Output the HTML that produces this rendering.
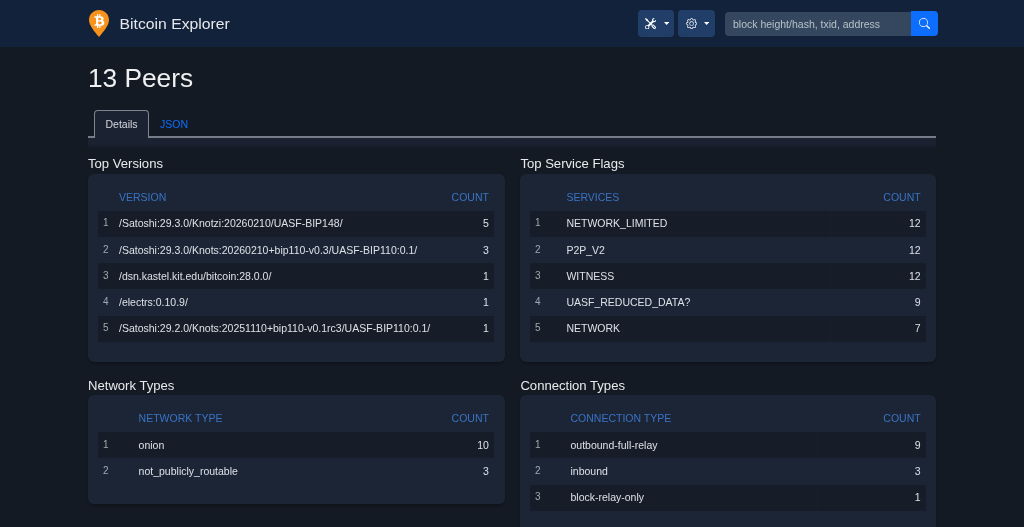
<!DOCTYPE html>
<html><head><meta charset="utf-8"><title>13 Peers</title><style>
*{box-sizing:border-box;margin:0;padding:0}
html,body{width:1024px;height:527px;overflow:hidden;background:#141a23;font-family:"Liberation Sans",sans-serif;color:#dde1e6}
.a{position:absolute;white-space:nowrap}
.nav{position:absolute;left:0;top:0;width:1024px;height:46.5px;background:#12223a}
.card{position:absolute;background:#1b2536;border-radius:6px;box-shadow:0 2px 2px -0.5px rgba(0,0,0,.22)}
.stripe{position:absolute;background:#161d29}
</style></head>
<body><div style="position:absolute;left:0;top:0;width:1024px;height:527px;will-change:transform">
<div class="nav"></div>
<svg class="a" style="left:88px;top:9px" width="22" height="29" viewBox="0 0 22 29">
<path d="M11 1.1 C5.4 1.1 1 5.5 1 11 C1 16.4 6.5 22.5 11 28 C15.5 22.5 21 16.4 21 11 C21 5.5 16.6 1.1 11 1.1Z" fill="#f7931a"/></svg>
<svg class="a" style="left:88.04px;top:9.66px" width="22.4" height="22.4" viewBox="0 0 64 64"><path transform="rotate(-14 32 32)" fill="#FFF" d="m46.11,27.441c0.637-4.258-2.605-6.547-7.038-8.074l1.438-5.768-3.511-0.875-1.4,5.616c-0.923-0.23-1.871-0.447-2.813-0.662l1.41-5.653-3.509-0.875-1.439,5.766c-0.764-0.174-1.514-0.346-2.242-0.527l0.004-0.018-4.842-1.209-0.934,3.75s2.605,0.597,2.55,0.634c1.422,0.355,1.679,1.296,1.636,2.042l-1.638,6.571c0.098,0.025,0.225,0.061,0.365,0.117-0.117-0.029-0.242-0.061-0.371-0.092l-2.296,9.205c-0.174,0.432-0.615,1.08-1.609,0.834,0.035,0.051-2.552-0.637-2.552-0.637l-1.743,4.019,4.569,1.139c0.85,0.213,1.683,0.436,2.503,0.646l-1.453,5.834,3.507,0.875,1.439-5.772c0.958,0.26,1.888,0.5,2.798,0.726l-1.434,5.745,3.511,0.875,1.453-5.823c5.987,1.133,10.489,0.676,12.384-4.739,1.527-4.360-0.076-6.875-3.226-8.515,2.294-0.529,4.022-2.038,4.483-5.155zM38.087,38.69c-1.085,4.36-8.426,2.003-10.806,1.412l1.928-7.729c2.38,0.594,10.012,1.77,8.878,6.317zm1.086-11.312c-0.99,3.966-7.1,1.951-9.082,1.457l1.748-7.007c1.982,0.494,8.365,1.416,7.334,5.55z"/></svg>
<div class="a" style="left:119.5px;top:15.39px;font-size:15.75px;line-height:18.9px;color:#e6e8eb;transform:scaleY(0.94);transform-origin:0 80%;">Bitcoin Explorer</div>
<div class="a" style="left:638px;top:10.3px;width:36px;height:26.5px;background:#213e69;border-radius:4px"></div>
<div class="a" style="left:678.2px;top:10.3px;width:36.6px;height:26.5px;background:#213e69;border-radius:4px"></div>
<svg class="a" style="left:644.7px;top:17.7px" width="11.3" height="11.3" viewBox="0 0 16 16" fill="#fff">
<path d="M1 0 0 1l2.2 3.081a1 1 0 0 0 .815.419h.07a1 1 0 0 1 .708.293l2.675 2.675-2.617 2.654A3.003 3.003 0 0 0 0 13a3 3 0 1 0 5.878-.851l2.654-2.617.968.968-.305.914a1 1 0 0 0 .242 1.023l3.27 3.27a.997.997 0 0 0 1.414 0l1.586-1.586a.997.997 0 0 0 0-1.414l-3.27-3.27a1 1 0 0 0-1.023-.242L10.5 9.5l-.96-.96 2.68-2.643A3.005 3.005 0 0 0 16 3c0-.269-.035-.53-.102-.777l-2.14 2.141L12 4l-.364-1.757L13.777.102a3 3 0 0 0-3.675 3.68L7.462 6.46 4.793 3.793a1 1 0 0 1-.293-.707v-.071a1 1 0 0 0-.419-.814L1 0Zm9.646 10.646a.5.5 0 0 1 .708 0l2.914 2.915a.5.5 0 0 1-.707.707l-2.915-2.914a.5.5 0 0 1 0-.708ZM3 11l.471.242.529.026.287.445.445.287.026.529L5 13l-.242.471-.026.529-.445.287-.287.445-.529.026L3 15l-.471-.242L2 14.732l-.287-.445L1.268 14l-.026-.529L1 13l.242-.471.026-.529.445-.287.287-.445.529-.026L3 11Z"/>
</svg>
<svg class="a" style="left:663.7px;top:21.9px" width="5.3" height="3" viewBox="0 0 5.3 3"><path d="M0 0 L5.3 0 L2.65 2.9Z" fill="#fff"/></svg>
<svg class="a" style="left:704.1px;top:21.9px" width="5.3" height="3" viewBox="0 0 5.3 3"><path d="M0 0 L5.3 0 L2.65 2.9Z" fill="#fff"/></svg>
<svg class="a" style="left:685.8px;top:17.7px" width="11.2" height="11.2" viewBox="0 0 16 16" fill="#fff">
<path d="M8 4.754a3.246 3.246 0 1 0 0 6.492 3.246 3.246 0 0 0 0-6.492zM5.754 8a2.246 2.246 0 1 1 4.492 0 2.246 2.246 0 0 1-4.492 0z"/>
<path d="M9.796 1.343c-.527-1.79-3.065-1.79-3.592 0l-.094.319a.873.873 0 0 1-1.255.52l-.292-.16c-1.64-.892-3.433.902-2.54 2.541l.159.292a.873.873 0 0 1-.52 1.255l-.319.094c-1.79.527-1.79 3.065 0 3.592l.319.094a.873.873 0 0 1 .52 1.255l-.16.292c-.892 1.64.901 3.434 2.541 2.54l.292-.159a.873.873 0 0 1 1.255.52l.094.319c.527 1.79 3.065 1.79 3.592 0l.094-.319a.873.873 0 0 1 1.255-.52l.292.16c1.64.893 3.434-.902 2.54-2.541l-.159-.292a.873.873 0 0 1 .52-1.255l.319-.094c1.79-.527 1.79-3.065 0-3.592l-.319-.094a.873.873 0 0 1-.52-1.255l.16-.292c.893-1.64-.902-3.433-2.541-2.54l-.292.159a.873.873 0 0 1-1.255-.52l-.094-.319zm-2.633.283c.246-.835 1.428-.835 1.674 0l.094.319a1.873 1.873 0 0 0 2.693 1.115l.291-.16c.764-.415 1.6.42 1.184 1.185l-.159.292a1.873 1.873 0 0 0 1.116 2.692l.318.094c.835.246.835 1.428 0 1.674l-.319.094a1.873 1.873 0 0 0-1.115 2.693l.16.291c.415.764-.42 1.6-1.185 1.184l-.291-.159a1.873 1.873 0 0 0-2.693 1.116l-.094.318c-.246.835-1.428.835-1.674 0l-.094-.319a1.873 1.873 0 0 0-2.692-1.115l-.292.16c-.764.415-1.6-.42-1.184-1.185l.159-.291A1.873 1.873 0 0 0 1.945 8.93l-.319-.094c-.835-.246-.835-1.428 0-1.674l.319-.094A1.873 1.873 0 0 0 3.06 4.377l-.16-.292c-.415-.764.42-1.6 1.185-1.184l.292.159a1.873 1.873 0 0 0 2.692-1.115l.094-.319z"/>
</svg>
<div class="a" style="left:724.5px;top:11.5px;width:190px;height:24.5px;background:#35475f;border-radius:4px 0 0 4px"></div>
<div class="a" style="left:733px;top:18.26px;font-size:10.5px;line-height:12.6px;color:#b6c2c9;">block height/hash, txid, address</div>
<div class="a" style="left:910.5px;top:11.3px;width:27.5px;height:24.7px;background:#0d6efd;border-radius:0 4px 4px 0"></div>
<svg class="a" style="left:918.5px;top:18px" width="11" height="11" viewBox="0 0 16 16" fill="#fff">
<path d="M11.742 10.344a6.5 6.5 0 1 0-1.397 1.398h-.001c.03.04.062.078.098.115l3.85 3.85a1 1 0 0 0 1.415-1.414l-3.85-3.85a1.007 1.007 0 0 0-.115-.1zM12 6.5a5.5 5.5 0 1 1-11 0 5.5 5.5 0 0 1 11 0z"/></svg>
<div class="a" style="left:88px;top:63.05px;font-size:26.25px;line-height:31.5px;color:#eef0f2;">13 Peers</div>
<div class="a" style="left:88px;top:136.2px;width:848px;height:1.4px;background:#767d88"></div>
<div class="a" style="left:88px;top:137.5px;width:848px;height:12px;background:linear-gradient(#1b2232 0%,#1a2131 45%,#141a23 100%)"></div>
<div class="a" style="left:93.9px;top:109.7px;width:55.2px;height:28.1px;background:#1b2232;border:1.3px solid #7f8690;border-bottom:none;border-radius:4px 4px 0 0"></div>
<div class="a" style="left:105.5px;top:117.96px;font-size:10.5px;line-height:12.6px;color:#d4d8de;">Details</div>
<div class="a" style="left:160px;top:117.96px;font-size:10.5px;line-height:12.6px;color:#0d6efd;">JSON</div>
<div class="a" style="left:88px;top:156.00px;font-size:13.1px;line-height:15.72px;color:#e8eaed;">Top Versions</div>
<div class="card" style="left:88px;top:174px;width:416.5px;height:187.7px"></div>
<div class="a" style="left:119px;top:190.86px;font-size:10.5px;line-height:12.6px;color:#3a73c4;">VERSION</div>
<div class="a" style="right:535.1px;top:190.86px;font-size:10.5px;line-height:12.6px;text-align:right;color:#3a73c4;">COUNT</div>
<div class="stripe" style="left:98px;top:210.80px;width:396.0px;height:26.2px"></div>
<div class="a" style="left:102.9px;top:217.44px;font-size:10px;line-height:12.0px;color:#a3a8b0;font-family:"Liberation Mono",monospace;">1</div>
<div class="a" style="left:119px;top:217.46px;font-size:10.5px;line-height:12.6px;">/Satoshi:29.3.0/Knotzi:20260210/UASF-BIP148/</div>
<div class="a" style="right:535.1px;top:217.46px;font-size:10.5px;line-height:12.6px;text-align:right;">5</div>
<div class="a" style="left:102.9px;top:243.63px;font-size:10px;line-height:12.0px;color:#a3a8b0;font-family:"Liberation Mono",monospace;">2</div>
<div class="a" style="left:119px;top:243.66px;font-size:10.5px;line-height:12.6px;">/Satoshi:29.3.0/Knots:20260210+bip110-v0.3/UASF-BIP110:0.1/</div>
<div class="a" style="right:535.1px;top:243.66px;font-size:10.5px;line-height:12.6px;text-align:right;">3</div>
<div class="stripe" style="left:98px;top:263.20px;width:396.0px;height:26.2px"></div>
<div class="a" style="left:102.9px;top:269.84px;font-size:10px;line-height:12.0px;color:#a3a8b0;font-family:"Liberation Mono",monospace;">3</div>
<div class="a" style="left:119px;top:269.86px;font-size:10.5px;line-height:12.6px;">/dsn.kastel.kit.edu/bitcoin:28.0.0/</div>
<div class="a" style="right:535.1px;top:269.86px;font-size:10.5px;line-height:12.6px;text-align:right;">1</div>
<div class="a" style="left:102.9px;top:296.04px;font-size:10px;line-height:12.0px;color:#a3a8b0;font-family:"Liberation Mono",monospace;">4</div>
<div class="a" style="left:119px;top:296.06px;font-size:10.5px;line-height:12.6px;">/electrs:0.10.9/</div>
<div class="a" style="right:535.1px;top:296.06px;font-size:10.5px;line-height:12.6px;text-align:right;">1</div>
<div class="stripe" style="left:98px;top:315.60px;width:396.0px;height:26.2px"></div>
<div class="a" style="left:102.9px;top:322.24px;font-size:10px;line-height:12.0px;color:#a3a8b0;font-family:"Liberation Mono",monospace;">5</div>
<div class="a" style="left:119px;top:322.26px;font-size:10.5px;line-height:12.6px;">/Satoshi:29.2.0/Knots:20251110+bip110-v0.1rc3/UASF-BIP110:0.1/</div>
<div class="a" style="right:535.1px;top:322.26px;font-size:10.5px;line-height:12.6px;text-align:right;">1</div>
<div class="a" style="left:520.4px;top:156.00px;font-size:13.1px;line-height:15.72px;color:#e8eaed;">Top Service Flags</div>
<div class="card" style="left:520px;top:174px;width:416.3px;height:187.7px"></div>
<div class="a" style="left:566.4px;top:190.86px;font-size:10.5px;line-height:12.6px;color:#3a73c4;">SERVICES</div>
<div class="a" style="right:103.30000000000007px;top:190.86px;font-size:10.5px;line-height:12.6px;text-align:right;color:#3a73c4;">COUNT</div>
<div class="stripe" style="left:530px;top:210.80px;width:395.8px;height:26.2px"></div>
<div class="a" style="left:830px;top:210.80px;width:1px;height:26.2px;background:#19202d"></div>
<div class="a" style="left:534.9px;top:217.44px;font-size:10px;line-height:12.0px;color:#a3a8b0;font-family:"Liberation Mono",monospace;">1</div>
<div class="a" style="left:566.4px;top:217.46px;font-size:10.5px;line-height:12.6px;">NETWORK_LIMITED</div>
<div class="a" style="right:103.30000000000007px;top:217.46px;font-size:10.5px;line-height:12.6px;text-align:right;">12</div>
<div class="a" style="left:534.9px;top:243.63px;font-size:10px;line-height:12.0px;color:#a3a8b0;font-family:"Liberation Mono",monospace;">2</div>
<div class="a" style="left:566.4px;top:243.66px;font-size:10.5px;line-height:12.6px;">P2P_V2</div>
<div class="a" style="right:103.30000000000007px;top:243.66px;font-size:10.5px;line-height:12.6px;text-align:right;">12</div>
<div class="stripe" style="left:530px;top:263.20px;width:395.8px;height:26.2px"></div>
<div class="a" style="left:830px;top:263.20px;width:1px;height:26.2px;background:#19202d"></div>
<div class="a" style="left:534.9px;top:269.84px;font-size:10px;line-height:12.0px;color:#a3a8b0;font-family:"Liberation Mono",monospace;">3</div>
<div class="a" style="left:566.4px;top:269.86px;font-size:10.5px;line-height:12.6px;">WITNESS</div>
<div class="a" style="right:103.30000000000007px;top:269.86px;font-size:10.5px;line-height:12.6px;text-align:right;">12</div>
<div class="a" style="left:534.9px;top:296.04px;font-size:10px;line-height:12.0px;color:#a3a8b0;font-family:"Liberation Mono",monospace;">4</div>
<div class="a" style="left:566.4px;top:296.06px;font-size:10.5px;line-height:12.6px;">UASF_REDUCED_DATA?</div>
<div class="a" style="right:103.30000000000007px;top:296.06px;font-size:10.5px;line-height:12.6px;text-align:right;">9</div>
<div class="stripe" style="left:530px;top:315.60px;width:395.8px;height:26.2px"></div>
<div class="a" style="left:830px;top:315.60px;width:1px;height:26.2px;background:#19202d"></div>
<div class="a" style="left:534.9px;top:322.24px;font-size:10px;line-height:12.0px;color:#a3a8b0;font-family:"Liberation Mono",monospace;">5</div>
<div class="a" style="left:566.4px;top:322.26px;font-size:10.5px;line-height:12.6px;">NETWORK</div>
<div class="a" style="right:103.30000000000007px;top:322.26px;font-size:10.5px;line-height:12.6px;text-align:right;">7</div>
<div class="a" style="left:88px;top:377.50px;font-size:13.1px;line-height:15.72px;color:#e8eaed;">Network Types</div>
<div class="card" style="left:88px;top:395.1px;width:416.5px;height:108.9px"></div>
<div class="a" style="left:138.6px;top:411.96px;font-size:10.5px;line-height:12.6px;color:#3a73c4;">NETWORK TYPE</div>
<div class="a" style="right:535.1px;top:411.96px;font-size:10.5px;line-height:12.6px;text-align:right;color:#3a73c4;">COUNT</div>
<div class="stripe" style="left:98px;top:432.10px;width:396.0px;height:26.2px"></div>
<div class="a" style="left:102.9px;top:438.74px;font-size:10px;line-height:12.0px;color:#a3a8b0;font-family:"Liberation Mono",monospace;">1</div>
<div class="a" style="left:138.6px;top:438.76px;font-size:10.5px;line-height:12.6px;">onion</div>
<div class="a" style="right:535.1px;top:438.76px;font-size:10.5px;line-height:12.6px;text-align:right;">10</div>
<div class="a" style="left:102.9px;top:464.94px;font-size:10px;line-height:12.0px;color:#a3a8b0;font-family:"Liberation Mono",monospace;">2</div>
<div class="a" style="left:138.6px;top:464.96px;font-size:10.5px;line-height:12.6px;">not_publicly_routable</div>
<div class="a" style="right:535.1px;top:464.96px;font-size:10.5px;line-height:12.6px;text-align:right;">3</div>
<div class="a" style="left:520.4px;top:377.50px;font-size:13.1px;line-height:15.72px;color:#e8eaed;">Connection Types</div>
<div class="card" style="left:520px;top:395.1px;width:416.3px;height:160px"></div>
<div class="a" style="left:570.5px;top:411.96px;font-size:10.5px;line-height:12.6px;color:#3a73c4;">CONNECTION TYPE</div>
<div class="a" style="right:103.30000000000007px;top:411.96px;font-size:10.5px;line-height:12.6px;text-align:right;color:#3a73c4;">COUNT</div>
<div class="stripe" style="left:530px;top:432.10px;width:395.8px;height:26.2px"></div>
<div class="a" style="left:816.5px;top:432.10px;width:1px;height:26.2px;background:#19202d"></div>
<div class="a" style="left:534.9px;top:438.74px;font-size:10px;line-height:12.0px;color:#a3a8b0;font-family:"Liberation Mono",monospace;">1</div>
<div class="a" style="left:570.5px;top:438.76px;font-size:10.5px;line-height:12.6px;">outbound-full-relay</div>
<div class="a" style="right:103.30000000000007px;top:438.76px;font-size:10.5px;line-height:12.6px;text-align:right;">9</div>
<div class="a" style="left:534.9px;top:464.94px;font-size:10px;line-height:12.0px;color:#a3a8b0;font-family:"Liberation Mono",monospace;">2</div>
<div class="a" style="left:570.5px;top:464.96px;font-size:10.5px;line-height:12.6px;">inbound</div>
<div class="a" style="right:103.30000000000007px;top:464.96px;font-size:10.5px;line-height:12.6px;text-align:right;">3</div>
<div class="stripe" style="left:530px;top:484.50px;width:395.8px;height:26.2px"></div>
<div class="a" style="left:816.5px;top:484.50px;width:1px;height:26.2px;background:#19202d"></div>
<div class="a" style="left:534.9px;top:491.14px;font-size:10px;line-height:12.0px;color:#a3a8b0;font-family:"Liberation Mono",monospace;">3</div>
<div class="a" style="left:570.5px;top:491.16px;font-size:10.5px;line-height:12.6px;">block-relay-only</div>
<div class="a" style="right:103.30000000000007px;top:491.16px;font-size:10.5px;line-height:12.6px;text-align:right;">1</div>
</div></body></html>
